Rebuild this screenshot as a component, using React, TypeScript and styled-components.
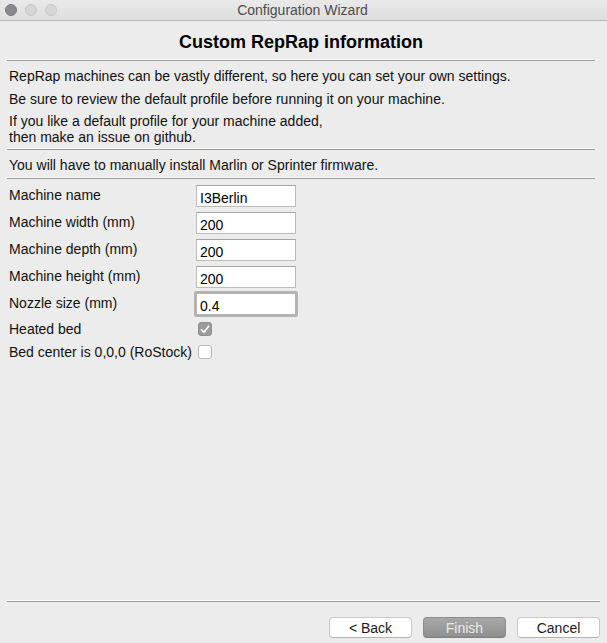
import React from "react";
import styled, { createGlobalStyle } from "styled-components";

const Global = createGlobalStyle`
  html, body { margin: 0; padding: 0; background: #ececec; }
  body { font-family: "Liberation Sans", Arial, Helvetica, sans-serif; font-size: 14px; color: #111; }
  #root { height: 643px; }
  * { box-sizing: border-box; }
`;

const Window = styled.div`
  height: 643px;
  display: flex;
  flex-direction: column;
  background: #ececec;
`;

const TitleBar = styled.div`
  height: 21px;
  flex: none;
  position: relative;
  display: flex;
  align-items: center;
  justify-content: center;
  background: linear-gradient(#e9e9e9, #dedede);
  border-bottom: 1px solid #b9b9b9;
`;

const Lights = styled.div`
  position: absolute;
  left: 5px;
  top: 4px;
  display: flex;
  gap: 8px;
`;

const Light = styled.span<{ $active?: boolean }>`
  width: 12px;
  height: 12px;
  border-radius: 50%;
  background: ${(p) => (p.$active ? "#8a8a8e" : "#d6d6d6")};
  border: 1px solid ${(p) => (p.$active ? "#7b7b7f" : "#c6c6c6")};
`;

const Title = styled.div`
  font-size: 14px;
  color: #4d4d4d;
  margin-left: -2px;
`;

const Body = styled.div`
  flex: 1;
  display: flex;
  flex-direction: column;
  padding: 0 12px 0 7px;
`;

const Heading = styled.h1`
  margin: 0;
  height: 38px;
  padding-top: 11px;
  text-align: center;
  font-size: 18px;
  line-height: 21px;
  font-weight: bold;
  color: #000;
`;

const Separator = styled.div<{ $mt?: number }>`
  height: 2px;
  flex: none;
  margin-top: ${(p) => p.$mt ?? 0}px;
  border-top: 1px solid #fbfbfb;
  border-bottom: 1px solid #9c9c9c;
`;

const Text = styled.p<{ $mt?: number }>`
  margin: ${(p) => p.$mt ?? 7}px 0 0 2px;
  font-size: 14px;
  line-height: 16px;
  color: #111;
`;

const Form = styled.div`
  margin: 6px 0 0 2px;
  display: grid;
  grid-template-columns: 187px 100px;
  grid-template-rows: repeat(5, 22px) 18px 18px;
  row-gap: 5px;
  align-items: center;
`;

const Label = styled.label<{ $shift?: number }>`
  font-size: 14px;
  line-height: 16px;
  color: #111;
  white-space: nowrap;
  margin-top: ${(p) => p.$shift ?? -2}px;
`;

const Input = styled.input<{ $focused?: boolean }>`
  width: 100px;
  height: 22px;
  padding: 3px 3px 0;
  font-family: "Liberation Sans", Arial, sans-serif;
  font-size: 14px;
  color: #000;
  background: #fff;
  border: 1px solid #bdbdbd;
  border-top-color: #a4a4a4;
  border-radius: 0;
  outline: none;
  box-shadow: ${(p) => (p.$focused ? "0 0 0 2px #b3b3b3" : "none")};
  ${(p) => (p.$focused ? "border-color: #b3b3b3; border-radius: 1px;" : "")}
`;

const Box = styled.span<{ $checked?: boolean }>`
  width: 14px;
  height: 14px;
  margin-left: 2px;
  border-radius: 3px;
  display: flex;
  align-items: center;
  justify-content: center;
  background: ${(p) => (p.$checked ? "#9b9b9b" : "#fff")};
  border: 1px solid ${(p) => (p.$checked ? "#8e8e8e" : "#b7b7b7")};
`;

const Footer = styled.div`
  margin-top: auto;
  padding: 0 7px 5px 7px;
  display: flex;
  flex-direction: column;
`;

const Buttons = styled.div`
  margin-top: 15px;
  display: flex;
  justify-content: flex-end;
  gap: 11px;
`;

const Button = styled.button<{ $primary?: boolean }>`
  width: 83px;
  height: 21px;
  padding: 0;
  font-family: "Liberation Sans", Arial, sans-serif;
  font-size: 14px;
  border-radius: 4px;
  color: ${(p) => (p.$primary ? "#e9e9e9" : "#1a1a1a")};
  background: ${(p) => (p.$primary ? "linear-gradient(#a8a8a8, #8f8f8f)" : "#fff")};
  border: 1px solid ${(p) => (p.$primary ? "#8c8c8c" : "#c8c8c8")};
  border-bottom-color: ${(p) => (p.$primary ? "#7d7d7d" : "#b2b2b2")};
`;

const Check = () => (
  <svg width="10" height="9" viewBox="0 0 10 9">
    <path d="M1.5 4.8 L4 7.3 L8.6 1.2" fill="none" stroke="#fff" strokeWidth="1.6" strokeLinecap="round" strokeLinejoin="round" />
  </svg>
);

const fields = [
  { label: "Machine name", value: "I3Berlin" },
  { label: "Machine width (mm)", value: "200" },
  { label: "Machine depth (mm)", value: "200" },
  { label: "Machine height (mm)", value: "200" },
  { label: "Nozzle size (mm)", value: "0.4", focused: true },
];

export default function App() {
  return (
    <Window>
      <Global />
      <TitleBar>
        <Lights>
          <Light $active />
          <Light />
          <Light />
        </Lights>
        <Title>Configuration Wizard</Title>
      </TitleBar>
      <Body>
        <Heading>Custom RepRap information</Heading>
        <Separator />
        <Text>RepRap machines can be vastly different, so here you can set your own settings.</Text>
        <Text>Be sure to review the default profile before running it on your machine.</Text>
        <Text $mt={6}>
          If you like a default profile for your machine added,
          <br />
          then make an issue on github.
        </Text>
        <Separator $mt={3} />
        <Text>You will have to manually install Marlin or Sprinter firmware.</Text>
        <Separator $mt={4} />
        <Form>
          {fields.map((f) => (
            <React.Fragment key={f.label}>
              <Label>{f.label}</Label>
              <Input defaultValue={f.value} $focused={f.focused} />
            </React.Fragment>
          ))}
          <Label $shift={0}>Heated bed</Label>
          <Box $checked>
            <Check />
          </Box>
          <Label $shift={0}>Bed center is 0,0,0 (RoStock)</Label>
          <Box />
        </Form>
      </Body>
      <Footer>
        <Separator />
        <Buttons>
          <Button>&lt; Back</Button>
          <Button $primary>Finish</Button>
          <Button>Cancel</Button>
        </Buttons>
      </Footer>
    </Window>
  );
}
